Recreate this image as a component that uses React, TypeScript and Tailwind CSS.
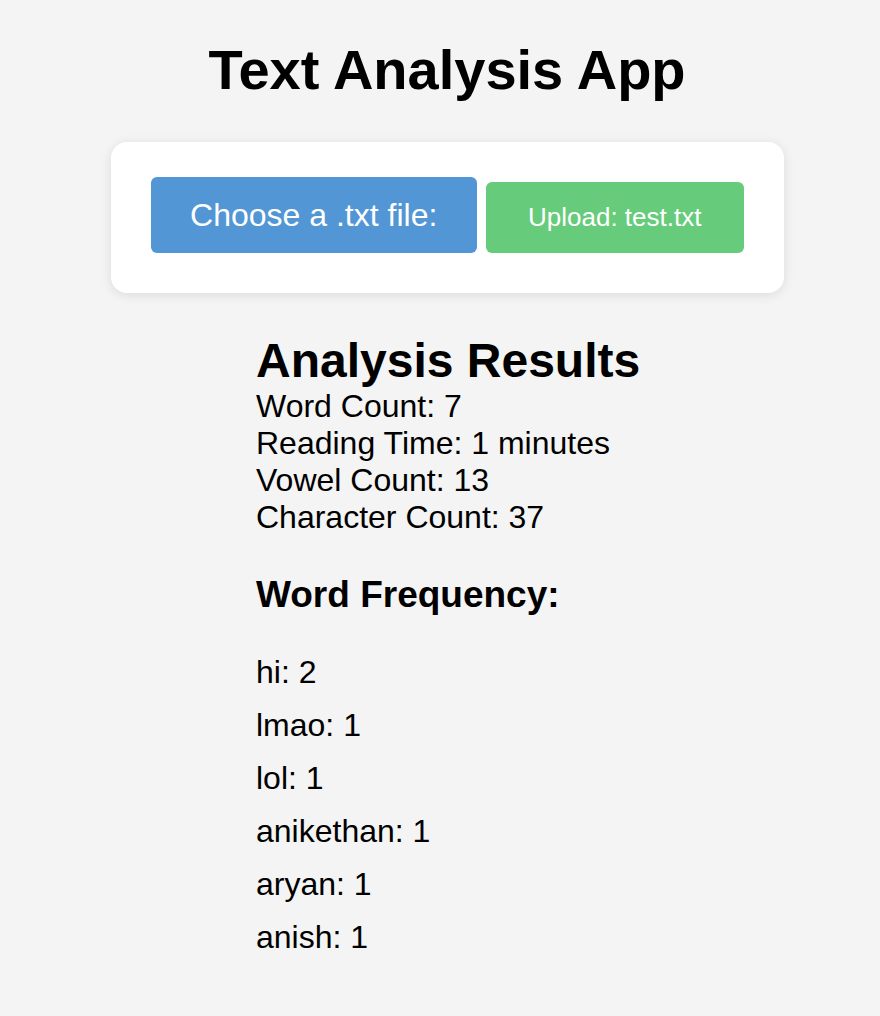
const results = [
  "Word Count: 7",
  "Reading Time: 1 minutes",
  "Vowel Count: 13",
  "Character Count: 37",
];

const frequency = [
  ["hi", 2],
  ["lmao", 1],
  ["lol", 1],
  ["anikethan", 1],
  ["aryan", 1],
  ["anish", 1],
] as const;

export default function App() {
  return (
    <main
      className="min-h-[1016px] w-full bg-[#f4f4f4] text-black"
      style={{ fontFamily: '"Liberation Sans", Arial, sans-serif' }}
    >
      {/* Header + upload card */}
      <div className="pl-[14px] pt-[38px] flex flex-col items-center">
        <h1 className="text-[56px] font-bold leading-[64px]">Text Analysis App</h1>

        <div className="mt-[40px] w-[673px] rounded-2xl bg-white shadow-[0_2px_12px_rgba(0,0,0,0.1)] pt-[35px] pb-[40px] px-[40px] flex items-end gap-[9px]">
          <label className="h-[76px] w-[327px] rounded-md bg-[#5296d5] text-white text-[32px] flex items-center justify-center cursor-pointer">
            Choose a .txt file:
          </label>
          <button className="h-[71px] w-[258px] rounded-md bg-[#66cb7b] text-white text-[26px] flex items-center justify-center">
            Upload: test.txt
          </button>
        </div>
      </div>

      {/* Results */}
      <section className="w-[368px] mx-auto mt-[40px] pb-10">
        <h2 className="text-[48px] font-bold leading-[55px] whitespace-nowrap">Analysis Results</h2>
        {results.map((r) => (
          <p key={r} className="text-[32px] leading-[37px]">
            {r}
          </p>
        ))}

        <h3 className="mt-[38px] text-[37px] font-bold leading-[42px]">Word Frequency:</h3>
        <ul className="mt-[38px]">
          {frequency.map(([word, n]) => (
            <li key={word} className="text-[32px] leading-[37px] mb-[16px]">
              {word}: {n}
            </li>
          ))}
        </ul>
      </section>
    </main>
  );
}
